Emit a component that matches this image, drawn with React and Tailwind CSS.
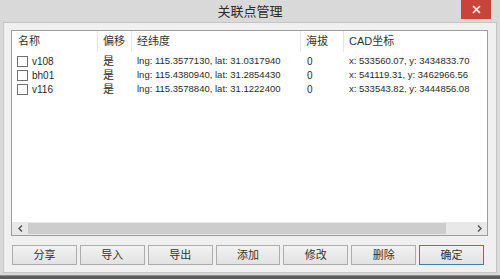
import React from 'react'

const rows = [
  { name: "v108", offset: "是", lnglat: "lng: 115.3577130, lat: 31.0317940", alt: "0", cad: "x: 533560.07, y: 3434833.70" },
  { name: "bh01", offset: "是", lnglat: "lng: 115.4380940, lat: 31.2854430", alt: "0", cad: "x: 541119.31, y: 3462966.56" },
  { name: "v116", offset: "是", lnglat: "lng: 115.3578840, lat: 31.1222400", alt: "0", cad: "x: 533543.82, y: 3444856.08" },
]

const buttons = ["分享", "导入", "导出", "添加", "修改", "删除", "确定"]

const font = { fontFamily: '"Liberation Sans", "Noto Sans CJK SC", sans-serif' }

const App = () => {
  return (
    <div className="w-[500px] h-[279px] bg-[#5c5c5c] overflow-hidden text-[#2a2a2a]" style={font}>
      <div className="h-[276px] bg-[#d9d9d9] flex flex-col px-[3px] pb-[2px] border-b border-[#8a8a8a]">
        {/* title bar */}
        <div className="h-[22px] flex items-center relative shrink-0">
          <div className="flex-1 text-center text-[13px] text-[#2b2b2b] leading-none pt-[1px]">关联点管理</div>
          <div className="absolute right-[6px] top-0 w-[30px] h-[19px] bg-[#c7433b] flex items-center justify-center">
            <svg width="9" height="9" viewBox="0 0 9 9">
              <path d="M1 1L8 8M8 1L1 8" stroke="#fff" strokeWidth="1.6" />
            </svg>
          </div>
        </div>

        {/* body */}
        <div className="flex-1 bg-[#f0f0f0] border border-[#c4c4c4] flex flex-col pl-[7px] pr-[8px] pt-[7px] pb-[6px]">
          <div className="h-[206px] bg-white border border-[#9d9d9d] flex flex-col overflow-hidden">
            {/* header */}
            <div className="h-[21px] flex items-center text-[11px] shrink-0 text-[#333]">
              <div className="w-[86px] pl-[6px] border-r border-[#e5e5e5] h-full flex items-center">名称</div>
              <div className="w-[34px] pl-[5px] border-r border-[#e5e5e5] h-full flex items-center">偏移</div>
              <div className="w-[169px] pl-[5px] border-r border-[#e5e5e5] h-full flex items-center">经纬度</div>
              <div className="w-[43px] pl-[5px] border-r border-[#e5e5e5] h-full flex items-center">海拔</div>
              <div className="flex-1 pl-[5px] h-full flex items-center">CAD坐标</div>
            </div>

            {/* rows */}
            <div className="flex-1 pt-[2px]">
              {rows.map((r) => (
                <div key={r.name} className="h-[14px] flex items-center text-[9.5px] whitespace-nowrap">
                  <div className="w-[86px] pl-[5px] flex items-center gap-[4px] text-[10px]">
                    <span className="w-[11px] h-[11px] border border-[#707070] bg-white" />
                    <span>{r.name}</span>
                  </div>
                  <div className="w-[34px] pl-[5px] text-[11px]">{r.offset}</div>
                  <div className="w-[169px] pl-[5px]">{r.lnglat}</div>
                  <div className="w-[43px] pl-[6px] text-[10px]">{r.alt}</div>
                  <div className="flex-1 pl-[5px]">{r.cad}</div>
                </div>
              ))}
            </div>

            {/* horizontal scrollbar */}
            <div className="h-[13px] flex items-stretch shrink-0 bg-[#e8e8e8]">
              <div className="w-[16px] flex items-center justify-center">
                <svg width="5" height="7" viewBox="0 0 5 7">
                  <path d="M4 0.5L1 3.5L4 6.5" fill="none" stroke="#505050" strokeWidth="1.4" />
                </svg>
              </div>
              <div className="flex-1 flex items-center">
                <div className="h-[11px] w-[418px] bg-[#cdcdcd]" />
              </div>
              <div className="w-[16px] flex items-center justify-center">
                <svg width="5" height="7" viewBox="0 0 5 7">
                  <path d="M1 0.5L4 3.5L1 6.5" fill="none" stroke="#505050" strokeWidth="1.4" />
                </svg>
              </div>
            </div>
          </div>

          {/* buttons */}
          <div className="flex gap-[3px] mt-[9px] pl-[1px] pr-[4px]">
            {buttons.map((b) => (
              <button
                key={b}
                className={
                  b === "确定"
                    ? "flex-1 h-[20px] text-[11px] text-[#333] border border-[#3c7fb1] bg-gradient-to-b from-[#f2f2f2] to-[#e2e2e2]"
                    : "flex-1 h-[20px] text-[11px] text-[#333] border border-[#adadad] bg-gradient-to-b from-[#f2f2f2] to-[#e2e2e2]"
                }
              >
                {b}
              </button>
            ))}
          </div>
        </div>
      </div>
    </div>
  )
}

export default App
